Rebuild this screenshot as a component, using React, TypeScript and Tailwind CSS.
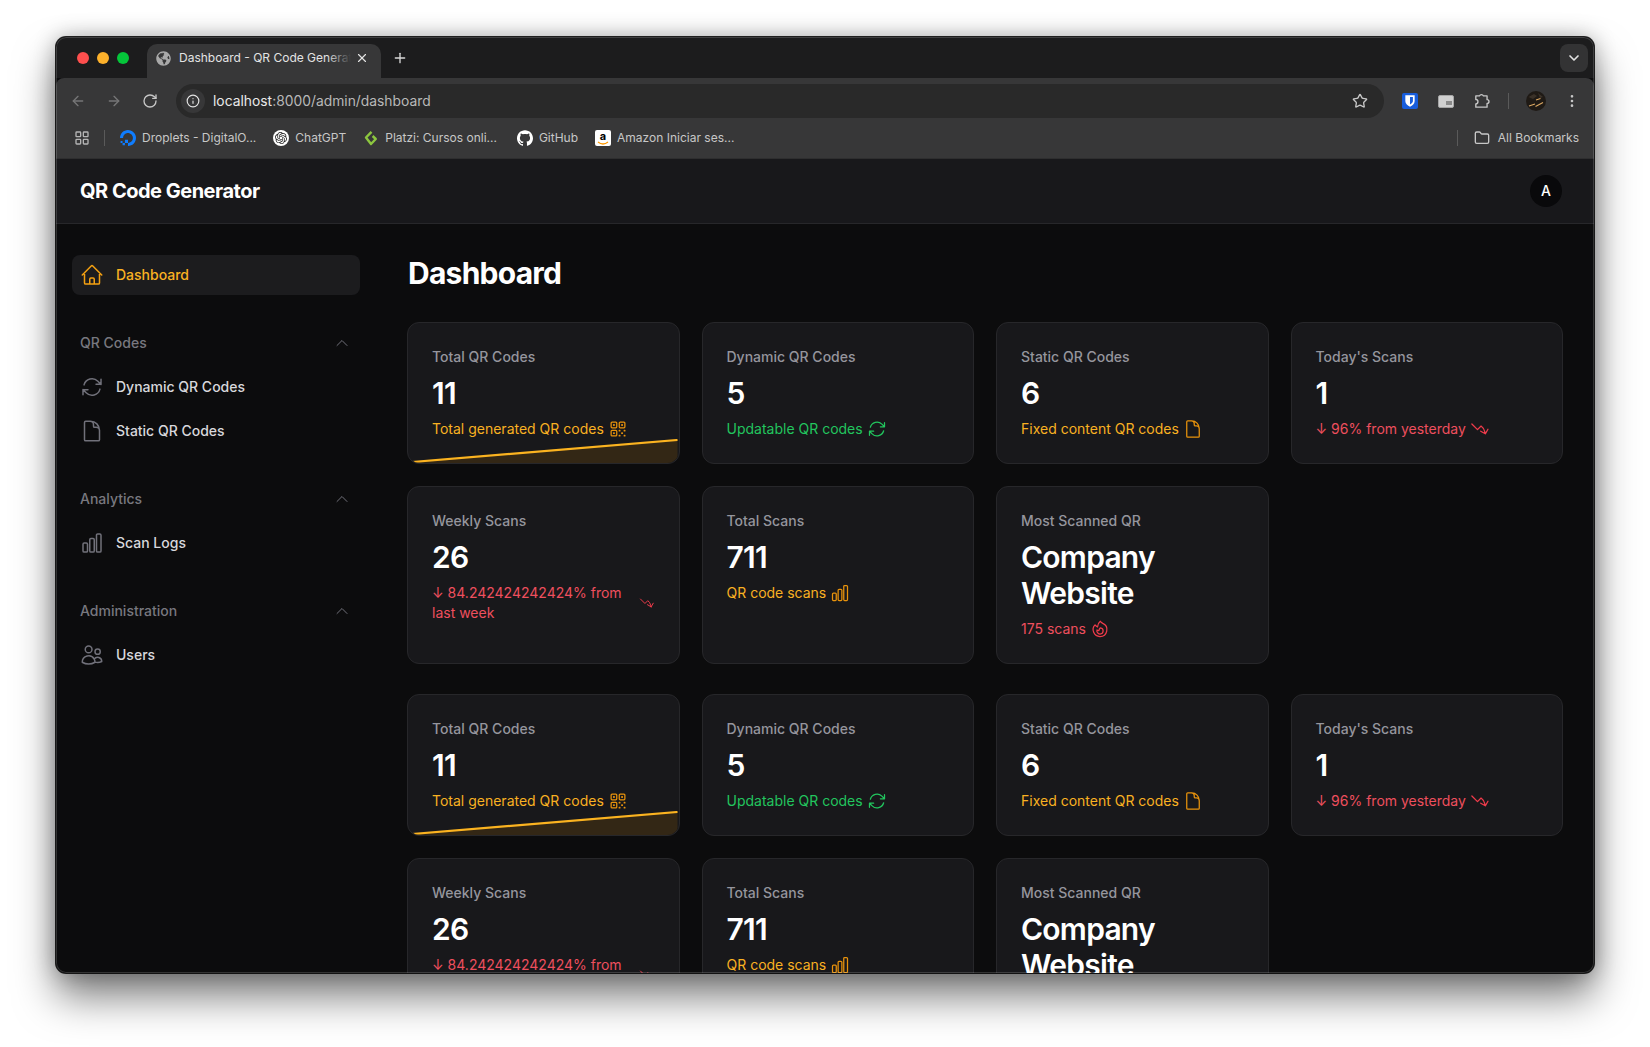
import React from 'react';
import {
  HiOutlineHome,
  HiOutlineArrowPath,
  HiOutlineDocument,
  HiOutlineChartBar,
  HiOutlineUsers,
  HiOutlineQrCode,
  HiOutlineArrowTrendingDown,
  HiOutlineFire,
  HiOutlineChevronUp,
} from 'react-icons/hi2';
import { ArrowLeft, ArrowRight, RotateCw, Info, Star, EllipsisVertical, Folder, X, Plus, ChevronDown, LayoutGrid } from 'lucide-react';
import { SiDigitalocean, SiOpenai, SiGithub } from 'react-icons/si';
import { FaGlobeAmericas } from 'react-icons/fa';

const bookmarks = [
  { label: 'Droplets - DigitalO...', icon: <SiDigitalocean className="w-4 h-4 text-[#0f7dff]" />, gap: '' },
  {
    label: 'ChatGPT',
    gap: '',
    icon: (
      <span className="w-4 h-4 rounded-full bg-white flex items-center justify-center">
        <SiOpenai className="w-3 h-3 text-[#222]" />
      </span>
    ),
  },
  {
    label: 'Platzi: Cursos onli...',
    gap: '',
    icon: (
      <svg viewBox="0 0 16 16" className="w-4 h-4" fill="none" stroke="#8cc63f" strokeWidth="2.4" strokeLinejoin="round">
        <path d="M8.500 1.800 3 7.500l5 6.500 4.800-5-3.200-3" />
      </svg>
    ),
  },
  { label: 'GitHub', icon: <SiGithub className="w-4 h-4 text-white" />, gap: 'ml-[3px]' },
  {
    label: 'Amazon Iniciar ses...',
    gap: '',
    icon: (
      <span className="w-4 h-4 rounded-[2px] bg-white flex flex-col items-center justify-start text-black text-[11px] font-bold leading-[12px]">
        a
        <svg viewBox="0 0 12 4" className="w-3 h-1 -mt-px" fill="none" stroke="#f90" strokeWidth="1.300">
          <path d="M1 1c3 2.400 7 2.400 10 0" />
        </svg>
      </span>
    ),
  },
];

function BrowserChrome() {
  return (
    <div className="shrink-0 text-[#c7c7c7]">
      <div className="h-[41px] bg-[#1c1c1d] flex items-end relative">
        <div className="flex gap-2 pl-[21px] pb-[14px]">
          <span className="w-3 h-3 rounded-full bg-[#fe4f4e]" />
          <span className="w-3 h-3 rounded-full bg-[#fdb12b]" />
          <span className="w-3 h-3 rounded-full bg-[#05c63a]" />
        </div>
        <div className="relative ml-[18px] w-[234px] h-[34px] bg-[#373738] rounded-t-[10px] flex items-center pl-[9px] pb-[6px]">
          <FaGlobeAmericas className="w-[15px] h-[15px] text-[#a9a9a9] shrink-0" />
          <div className="relative ml-2 w-[172px] overflow-hidden whitespace-nowrap text-[12px] text-[#e3e3e3]">
            Dashboard - QR Code Generator
            <span className="absolute right-0 top-0 bottom-0 w-6 bg-gradient-to-r from-transparent to-[#373738]" />
          </div>
          <X className="w-3.5 h-3.5 text-[#e3e3e3] ml-[4px]" />
        </div>
        <Plus className="w-4 h-4 text-[#d8d8d8] ml-[11px] mb-[12px]" />
        <div className="ml-auto mr-[6px] mb-[6px] w-7 h-7 rounded-lg bg-[#333334] flex items-center justify-center">
          <ChevronDown className="w-4 h-4 text-[#e3e3e3]" strokeWidth={2.5} />
        </div>
      </div>

      <div className="h-[46px] bg-[#373738] rounded-t-[8px] flex items-center">
        <ArrowLeft className="w-4 h-4 ml-[14px] text-[#767677]" />
        <ArrowRight className="w-4 h-4 ml-5 text-[#767677]" />
        <RotateCw className="w-4 h-4 ml-5 text-[#c7c7c7]" />
        <div className="ml-[18px] w-[1208px] h-[34px] rounded-full bg-[#292929] flex items-center pl-[5px]">
          <span className="w-6 h-6 rounded-full bg-[#373738] flex items-center justify-center">
            <Info className="w-3.5 h-3.5 text-[#e3e3e3]" />
          </span>
          <span className="ml-2 text-[13.85px] text-[#b8b8b8]">
            <span className="text-[#e8e8e8]">localhost</span>:8000/admin/dashboard
          </span>
          <Star className="w-4 h-4 ml-auto mr-4 text-[#c7c7c7]" />
        </div>
        <span className="ml-[18px] w-4 h-4 rounded-[2px] bg-[#175ddc] flex items-center justify-center">
          <svg viewBox="0 0 12 12" className="w-3.5 h-3.5">
            <path d="M2 1h8v5c0 2.400-2 4-4 5-2-1-4-2.600-4-5z" fill="#fff" />
            <path d="M6 2.500h2.500V6c0 1.300-1.200 2.200-2.500 2.900z" fill="#175ddc" />
          </svg>
        </span>
        <span className="ml-5 w-4 h-[13px] rounded-[2px] bg-[#d0d0d0] border border-[#a5a5a5] flex items-end justify-end">
          <span className="w-[6px] h-[4px] bg-[#8a8a8a] mb-[2px] mr-[1px]" />
        </span>
        <svg viewBox="0 0 16 16" className="w-[18px] h-[18px] ml-[19px]" fill="none" stroke="#c7c7c7" strokeWidth="1.200" strokeLinejoin="round">
          <path d="M2.500 3.500h3.200a2 2 0 0 1 3.600 0h3.200v3.300a1.700 1.700 0 0 1 0 3.400v3.300h-10v-3a1.900 1.900 0 0 0 0-3.800z" />
        </svg>
        <span className="ml-[17px] w-px h-4 bg-[#5a5a5a]" />
        <svg viewBox="0 0 20 20" className="w-5 h-5 ml-[17px]">
          <circle cx="10" cy="10" r="10" fill="#1f1a15" />
          <path d="M2.500 6 8 3l3 2-4 3zM12 2l5 4-3 1z" fill="#3a3128" />
          <path d="M3 15 9 13M9.500 15.500 17 11.500M10 9l4.500-1.500" stroke="#d9a662" strokeWidth="1.100" fill="none" />
        </svg>
        <EllipsisVertical className="w-4 h-4 ml-[18px] text-[#c7c7c7]" />
      </div>

      <div className="h-[35px] bg-[#373738] border-b border-[#2e2e2f] flex items-center text-xs pb-[6px]">
        <LayoutGrid className="w-4 h-4 ml-[18px] text-[#b5b5b5]" />
        <span className="ml-[14px] mr-[15px] w-px h-4 bg-[#5a5a5a]" />
        <div className="flex items-center gap-[17px]">
          {bookmarks.map((b) => (
            <div key={b.label} className={`flex items-center gap-[6px] whitespace-nowrap ${b.gap}`}>
              {b.icon}
              <span>{b.label}</span>
            </div>
          ))}
        </div>
        <span className="ml-auto w-px h-4 bg-[#5a5a5a]" />
        <Folder className="w-4 h-4 ml-[16px] text-[#c7c7c7]" />
        <span className="ml-2 mr-[15px]">All Bookmarks</span>
      </div>
    </div>
  );
}

function NavItem({ icon: Icon, label, active = false }: { icon: React.ElementType; label: string; active?: boolean }) {
  return (
    <div className={`flex items-center gap-3 px-2 py-2 rounded-lg text-sm font-medium ${active ? 'bg-[#1c1c1e] text-[#f9b122]' : 'text-[#d8d8dc]'}`}>
      <Icon className={`w-6 h-6 shrink-0 ${active ? 'text-[#f3a012]' : 'text-[#71717a]'}`} />
      <span>{label}</span>
    </div>
  );
}

function NavGroup({ title, children }: { title: string; children: React.ReactNode }) {
  return (
    <div className="flex flex-col gap-1">
      <div className="h-10 flex items-center justify-between pl-2 pr-[10px]">
        <span className="text-sm font-medium text-[#78787f]">{title}</span>
        <HiOutlineChevronUp className="w-4 h-4 text-[#71717a]" />
      </div>
      {children}
    </div>
  );
}

function Sidebar() {
  return (
    <aside className="w-80 shrink-0 px-4 pt-[31px] pb-8 flex flex-col gap-7">
      <NavItem icon={HiOutlineHome} label="Dashboard" active />
      <NavGroup title="QR Codes">
        <NavItem icon={HiOutlineArrowPath} label="Dynamic QR Codes" />
        <NavItem icon={HiOutlineDocument} label="Static QR Codes" />
      </NavGroup>
      <NavGroup title="Analytics">
        <NavItem icon={HiOutlineChartBar} label="Scan Logs" />
      </NavGroup>
      <NavGroup title="Administration">
        <NavItem icon={HiOutlineUsers} label="Users" />
      </NavGroup>
    </aside>
  );
}

type Stat = {
  label: string;
  value: string;
  desc: string;
  text: string;
  iconColor: string;
  icon: React.ElementType;
  chart?: boolean;
};

const amberText = 'text-[#f9b122]';
const amberIcon = 'text-[#e8920c]';
const roseText = 'text-[#ee4f5e]';
const roseIcon = 'text-[#ef3b4b]';

const stats: Stat[] = [
  { label: 'Total QR Codes', value: '11', desc: 'Total generated QR codes', text: amberText, iconColor: amberIcon, icon: HiOutlineQrCode, chart: true },
  { label: 'Dynamic QR Codes', value: '5', desc: 'Updatable QR codes', text: 'text-[#22c55e]', iconColor: 'text-[#22c55e]', icon: HiOutlineArrowPath },
  { label: 'Static QR Codes', value: '6', desc: 'Fixed content QR codes', text: amberText, iconColor: amberIcon, icon: HiOutlineDocument },
  { label: "Today's Scans", value: '1', desc: '↓ 96% from yesterday', text: roseText, iconColor: roseIcon, icon: HiOutlineArrowTrendingDown },
  { label: 'Weekly Scans', value: '26', desc: '↓ 84.242424242424% from last week', text: roseText, iconColor: roseIcon, icon: HiOutlineArrowTrendingDown },
  { label: 'Total Scans', value: '711', desc: 'QR code scans', text: amberText, iconColor: amberIcon, icon: HiOutlineChartBar },
  { label: 'Most Scanned QR', value: 'Company Website', desc: '175 scans', text: roseText, iconColor: roseIcon, icon: HiOutlineFire },
];

function StatCard({ stat }: { stat: Stat }) {
  const Icon = stat.icon;
  return (
    <div className="relative rounded-xl bg-[#18181b] border border-[#27272a] p-6 -m-px flex flex-col gap-2">
      <div className="text-sm font-medium text-[#95959d]">{stat.label}</div>
      <div className="text-3xl font-semibold tracking-tight text-white">{stat.value}</div>
      <div className={`flex items-center gap-1 text-sm ${stat.text}`}>
        <span>{stat.desc}</span>
        <Icon className={`w-5 h-5 ${stat.iconColor}`} />
      </div>
      {stat.chart && (
        <div className="absolute inset-x-0 bottom-0 h-6 overflow-hidden rounded-b-xl">
          <svg viewBox="0 0 270 24" className="w-full h-full" preserveAspectRatio="none">
            <path d="M4 23 269 1V24H4z" fill="#332715" />
            <path d="M4 23 269 1" fill="none" stroke="#fbb320" strokeWidth="2.200" />
          </svg>
        </div>
      )}
    </div>
  );
}

function StatsGrid() {
  return (
    <div className="grid grid-cols-4 gap-6">
      {stats.map((s) => (
        <StatCard key={s.label} stat={s} />
      ))}
    </div>
  );
}

export default function App() {
  return (
    <div className="w-[1650px] h-[1047px] overflow-hidden bg-white pl-[56px] pt-[37px] font-['Inter',sans-serif]">
      <div className="relative w-[1538px] h-[936px] rounded-[10px] overflow-hidden flex flex-col bg-[#0c0c0d] shadow-[0_0_0_1px_rgba(0,0,0,0.85),0_24px_40px_rgba(0,0,0,0.5),0_0_22px_rgba(0,0,0,0.3)]">
        <BrowserChrome />
        <header className="h-[65px] shrink-0 bg-[#18181b] border-b border-[#27272a] flex items-center justify-between pl-6 pr-8">
          <span className="text-xl font-bold tracking-tight text-white">QR Code Generator</span>
          <span className="w-8 h-8 rounded-full bg-[#09090b] text-white text-sm font-medium flex items-center justify-center">A</span>
        </header>
        <div className="flex flex-1 min-h-0 overflow-hidden">
          <Sidebar />
          <main className="flex-1 px-8 pt-[31px] pb-8 flex flex-col gap-8">
            <h1 className="text-3xl font-bold tracking-tight text-white">Dashboard</h1>
            <StatsGrid />
            <StatsGrid />
          </main>
        </div>
        <div className="absolute inset-0 rounded-[10px] pointer-events-none shadow-[inset_0_0_0_1px_rgba(255,255,255,0.16)]" />
      </div>
    </div>
  );
}
